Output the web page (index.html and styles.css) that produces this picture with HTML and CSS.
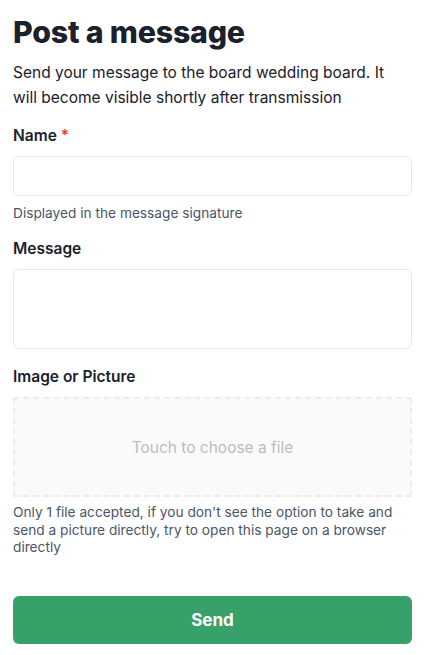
FILE: index.html
```html
<!DOCTYPE html>
<html>
<head>
<meta charset="utf-8">
<link rel="stylesheet" href="styles.css">
</head>
<body>
<main class="page">
  <h1 class="title">Post a message</h1>
  <p class="intro">Send your message to the board wedding board. It will become visible shortly after transmission</p>

  <div class="field field-name">
    <label class="label">Name <span class="req">*</span></label>
    <div class="input"></div>
    <div class="help">Displayed in the message signature</div>
  </div>

  <div class="field field-message">
    <label class="label">Message</label>
    <div class="textarea"></div>
  </div>

  <div class="field field-image">
    <label class="label">Image or Picture</label>
    <div class="drop">Touch to choose a file</div>
    <div class="help help-multi">Only 1 file accepted, if you don't see the option to take and send a picture directly, try to open this page on a browser directly</div>
  </div>

  <button class="send">Send</button>
</main>
</body>
</html>
```

FILE: styles.css
```css
* { box-sizing: border-box; }
html, body { margin: 0; padding: 0; background: #fff; }
body {
  font-family: Inter, "Noto Sans", sans-serif;
  color: #1a202c;
}
.page {
  padding: 14px 13px 12px 13px;
  display: flex;
  flex-direction: column;
}
.title {
  margin: 0;
  font-size: 30.3px;
  line-height: 36px;
  font-weight: 800;
  color: #1a202c;
  letter-spacing: -0.2px;
}
.intro {
  margin: 10px 0 0 0;
  font-size: 15.5px;
  line-height: 25px;
  color: #1a202c;
}
.field { display: flex; flex-direction: column; }
.field-name { margin-top: 14px; }
.field-message { margin-top: 15px; }
.field-image { margin-top: 16px; }
.label {
  font-size: 15.5px;
  line-height: 24px;
  font-weight: 600;
  margin-bottom: 8px;
}
.req { color: #e53e3e; }
.input {
  height: 40px;
  border: 1px solid #e2e8f0;
  border-radius: 6px;
}
.textarea {
  height: 80px;
  border: 1px solid #e2e8f0;
  border-radius: 6px;
}
.help {
  margin-top: 8px;
  font-size: 13.7px;
  line-height: 18px;
  color: #4a5568;
}
.help-multi { line-height: 17.5px; margin-top: 7px; }
.drop {
  height: 100px;
  border: 2px dashed #ececec;
  background: #fafafa;
  border-radius: 2px;
  display: flex;
  align-items: center;
  justify-content: center;
  font-size: 15.5px;
  color: #bdbdbd;
}
.send {
  margin-top: 39px;
  height: 48px;
  border: none;
  border-radius: 6px;
  background: #38a169;
  color: #fff;
  font-family: inherit;
  font-size: 17px;
  font-weight: 700;
}
```
